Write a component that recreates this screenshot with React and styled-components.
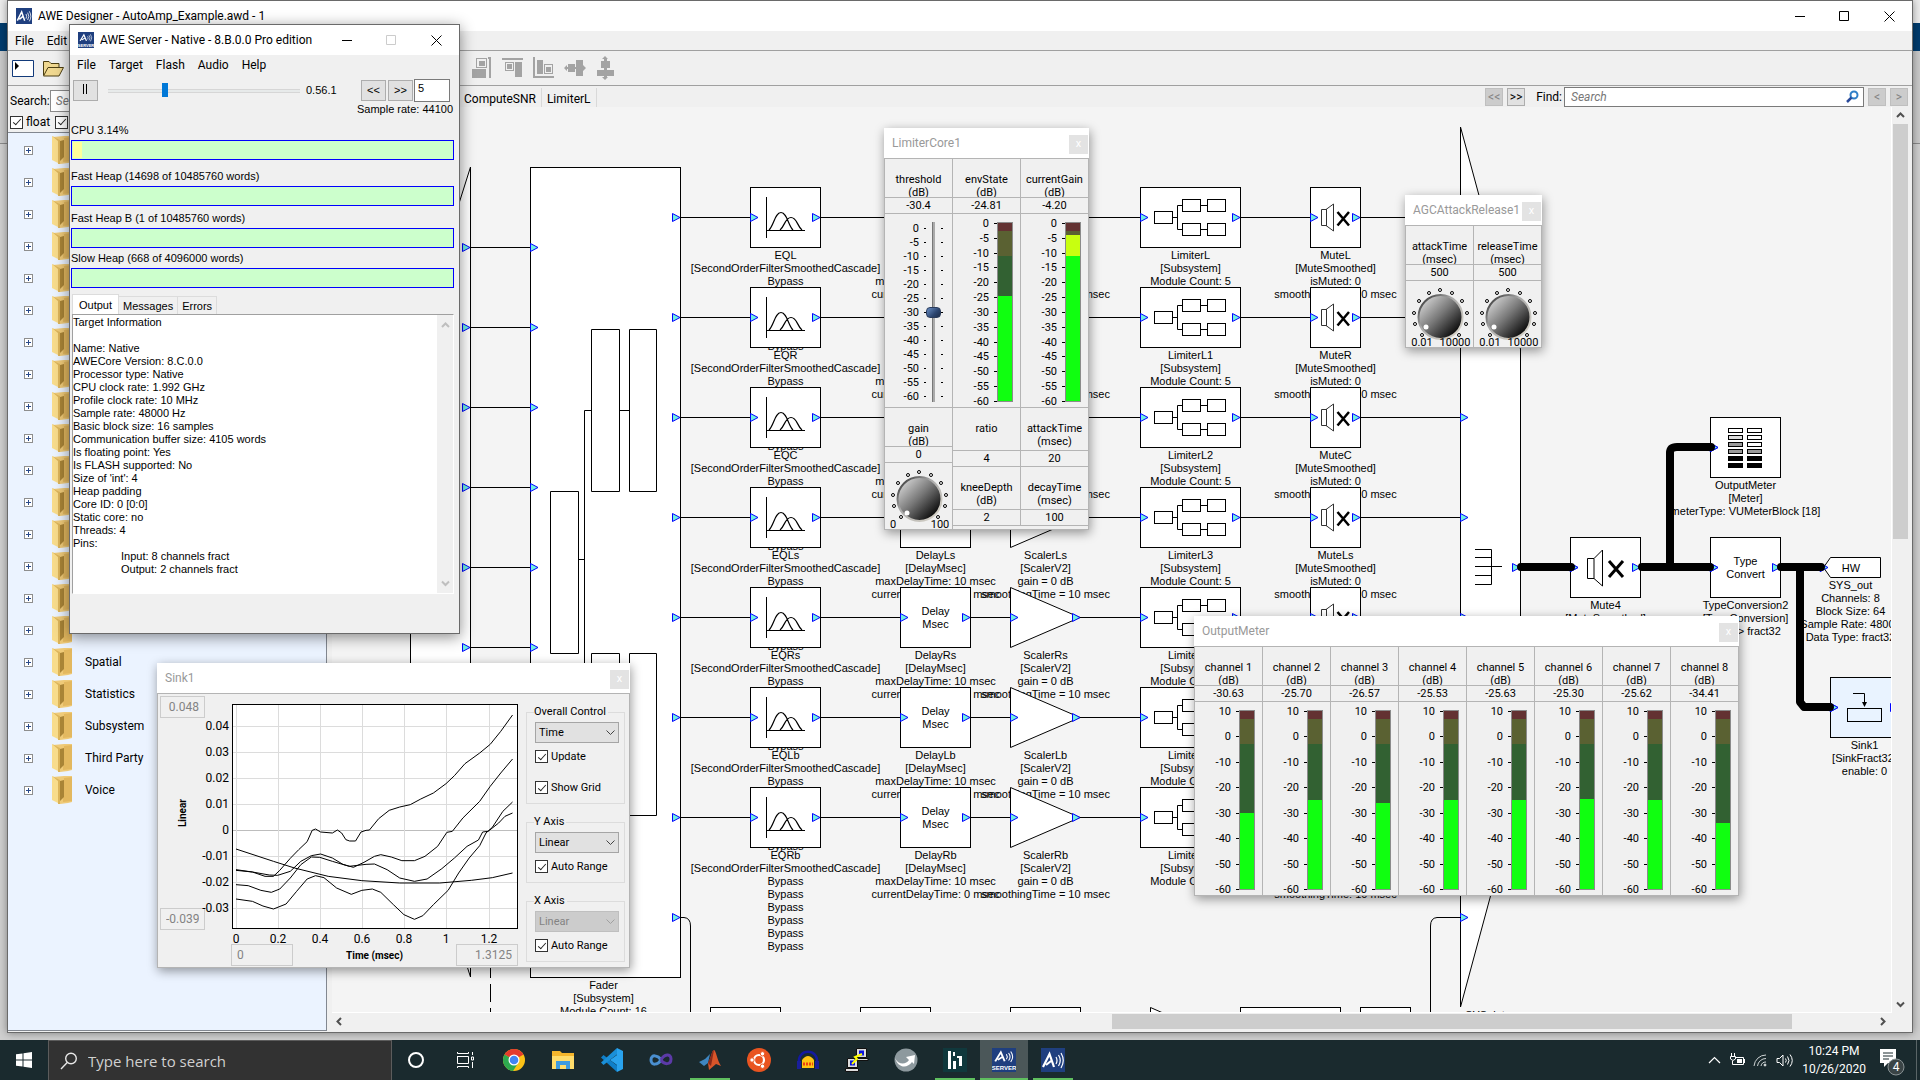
import React from "react";
import styled, { createGlobalStyle, css } from "styled-components";

const ui = `"Segoe UI", "Open Sans", "Noto Sans", sans-serif`;
const tahoma = `Tahoma, Roboto, "Noto Sans", sans-serif`;
const arial = `"Liberation Sans", Arial, sans-serif`;

const Global = createGlobalStyle`
  *, *::before, *::after { box-sizing: border-box; }
  body { margin: 0; background: #cfcfcf; color: #000; font: 12px/16px ${tahoma}; overflow: hidden; }
  button, input, select, textarea { font: inherit; color: inherit; margin: 0; border-radius: 0; }
`;

/* ---------- desktop ---------- */
const Desktop = styled.div`
  height: 100vh;
  display: flex;
  flex-direction: column;
`;
const Area = styled.div`
  position: relative;
  flex: 1;
  min-height: 0;
  overflow: hidden;
  background: linear-gradient(#ececec 0 23px, #003c6e 23px 51px, #c9c9c9 51px 143px, #8a8a8a 143px 144px, #cfcfcf 144px);
`;
const AppWindow = styled.section`
  position: absolute;
  display: flex;
  flex-direction: column;
  background: #f0f0f0;
  border: 1px solid #6a6a6a;
  box-shadow: ${(p) => (p.$flat ? "0 0 8px rgba(0,0,0,.4)" : "0 3px 14px rgba(0,0,0,.45)")};
`;
const MainWindow = styled(AppWindow)`
  inset: 0 7px 7px 7px;
`;
const ServerWindow = styled(AppWindow)`
  left: 69px;
  top: 24px;
  width: 391px;
  height: 610px;
`;
const TitleBar = styled.header`
  display: flex;
  align-items: center;
  height: 30px;
  flex: none;
  background: #fff;
  padding-left: 8px;
`;
const Title = styled.h1`
  margin: 0 0 0 6px;
  flex: 1;
  font: 12px/16px ${tahoma};
  white-space: nowrap;
`;
const WinButton = styled.button`
  width: 45px;
  height: 30px;
  padding: 0;
  border: 0;
  background: none;
  display: grid;
  place-items: center;
  color: ${(p) => (p.disabled ? "#ccc" : "#000")};
`;
const MenuBar = styled.nav`
  display: flex;
  align-items: center;
  flex: none;
  height: 19px;
  padding-left: 7px;
  gap: 13px;
  button { border: 0; background: none; padding: 0; line-height: 16px; }
`;
const ToolBar = styled.div`
  display: flex;
  align-items: center;
  height: 36px;
  flex: none;
  border-top: 1px solid #a0a0a0;
  border-bottom: 1px solid #a0a0a0;
  padding-left: 4px;
  gap: 10px;
  button { border: 0; background: none; padding: 0; display: grid; place-items: center; width: 21px; height: 24px; }
`;
const ToolSpacer = styled.span`
  width: 387px;
`;
const Body = styled.div`
  display: flex;
  flex: 1;
  min-height: 0;
`;

/* ---------- module tree ---------- */
const Side = styled.aside`
  width: 324px;
  flex: none;
  display: flex;
  flex-direction: column;
  padding: 0 5px 1px 0;
`;
const SearchRow = styled.div`
  display: flex;
  align-items: center;
  height: 26px;
  padding: 3px 0 0 2px;
  input { flex: 1; height: 22px; border: 1px solid #8a8a8a; padding: 0 5px; background: #fff; }
  input::placeholder { font-style: italic; color: #777; }
`;
const CheckRow = styled.div`
  display: flex;
  align-items: center;
  height: 20px;
  padding-left: 2px;
  gap: 5px;
`;
const Check = styled.label`
  display: flex;
  align-items: center;
  gap: 3px;
  height: 13px;
  white-space: nowrap;
  input {
    appearance: none;
    width: 13px;
    height: 13px;
    flex: none;
    border: 1px solid #333;
    background: #fff;
    display: grid;
    place-items: center;
  }
  input:checked::after {
    content: "";
    width: 4px;
    height: 8px;
    border: solid #222;
    border-width: 0 1px 1px 0;
    transform: rotate(42deg);
    margin-top: -2px;
  }
`;
const Tree = styled.ul`
  flex: 1;
  margin: 0;
  padding: 1px 0 0 16px;
  list-style: none;
  background: #ebf3ff;
  border: 1px solid #828790;
  border-left: 0;
  overflow: hidden;
`;
const TreeItem = styled.li`
  display: flex;
  align-items: center;
  height: 32px;
  font-size: 12px;
  button {
    width: 9px;
    height: 9px;
    border: 1px solid #8e8e8e;
    background: #fff;
    padding: 0;
    display: grid;
    place-items: center;
  }
  svg.folder { margin: 0 11px 0 19px; }
`;

/* ---------- schematic area ---------- */
const Work = styled.main`
  flex: 1;
  min-width: 0;
  display: flex;
  flex-direction: column;
  padding-bottom: 2px;
`;
const TabStrip = styled.div`
  display: flex;
  align-items: center;
  height: 21px;
  flex: none;
`;
const SheetTabs = styled.div`
  display: flex;
  align-self: stretch;
  flex: 1;
  padding-left: 127px;
  padding-top: 2px;
  button { border: 0; border-right: 1px solid #d9d9d9; background: none; padding: 3px 5px 0; line-height: 16px; }
`;
const SmallButton = styled.button`
  width: 18px;
  height: 18px;
  margin-right: 4px;
  padding: 0;
  border: 1px solid ${(p) => (p.disabled ? "#bfbfbf" : "#adadad")};
  background: ${(p) => (p.disabled ? "#ccc" : "#e1e1e1")};
  color: ${(p) => (p.disabled ? "#838383" : "#000")};
  font: 12px/14px ${tahoma};
`;
const FindLabel = styled.label`
  padding: 0 2px 0 7px;
  line-height: 18px;
`;
const FindBox = styled.span`
  display: flex;
  align-items: center;
  width: 300px;
  height: 20px;
  margin-right: 4px;
  padding-right: 4px;
  border: 1px solid #7a7a7a;
  background: #fff;
  input { flex: 1; min-width: 0; border: 0; outline: 0; background: none; padding: 0 6px; height: 18px; }
  input::placeholder { font-style: italic; color: #777; }
`;
const CanvasRow = styled.div`
  flex: 1;
  min-height: 0;
  display: flex;
`;
const Canvas = styled.div`
  position: relative;
  flex: 1;
  overflow: hidden;
  background: #f4f4f4;
  border-right: 1px solid #fff;
  border-bottom: 1px solid #fff;
`;
const Scrolled = styled.div`
  position: absolute;
  left: -332px;
  top: -107px;
  width: 2000px;
  height: 1200px;
`;
const Wires = styled.svg`
  position: absolute;
  inset: 0;
`;
const Bar = styled.div`
  display: flex;
  flex: none;
  justify-content: space-between;
  align-items: center;
  background: #f0f0f0;
  ${(p) => (p.$vertical
    ? css`width: 16px; flex-direction: column; padding: 4px 0; margin-right: 4px;`
    : css`height: 17px; padding: 0 25px 0 3px;`)}
`;
const ThumbV = styled.span`
  width: 15px;
  height: 415px;
  margin: 4px 0 auto;
  background: #cdcdcd;
`;
const ThumbH = styled.span`
  width: 680px;
  height: 15px;
  margin: 0 86px 0 auto;
  background: #cdcdcd;
`;

const Node = styled.div`
  position: absolute;
  left: ${(p) => p.$x}px;
  top: ${(p) => p.$y}px;
  width: ${(p) => p.$w}px;
  display: flex;
  flex-direction: column;
  align-items: center;
  font: 11px/13px ${arial};
  text-align: center;
  white-space: pre;
`;
const Block = styled.div`
  display: flex;
  align-items: center;
  justify-content: space-between;
  flex: none;
  width: 100%;
  height: 61px;
  margin-bottom: 1px;
  border: 1px solid #000;
  background: ${(p) => p.$fill || "#fff"};
  > svg:first-child { margin-left: -1px; }
  > svg:last-child { margin-right: -1px; }
`;

const Port = () => (
  <svg width="9" height="9" aria-hidden="true"><path d="M.5 .5 8 4.500.5 8.500Z" fill="#70f0e0" stroke="#00f" /></svg>
);
const PortAt = ({ x, y }) => <path d={`M${x + 0.5} ${y - 4}l7.500 4-7.500 4z`} fill="#70f0e0" stroke="#00f" />;

const EqGlyph = () => (
  <svg width="40" height="42" fill="none" stroke="#000">
    <path d="M.5 0V41M0 33.500H39" />
    <path d="M3 33C8 28 9 15.500 15 15.500S22 28 27 33M14 33C19 29 19 20.500 25 20.500S31 29 36 33" strokeWidth="1.200" />
  </svg>
);
const SubGlyph = () => (
  <svg width="74" height="38" fill="#fff" stroke="#000">
    <path d="M19 18.500H23.500M28 6.500H23.500V30.500H28M47 6.500H53M47 30.500H53" fill="none" />
    <rect x=".5" y="12.500" width="18" height="12" />
    {[28.5, 53.5].map((x) => [0.5, 24.5].map((y) => <rect key={x + y} x={x} y={y} width="18" height="12" />))}
  </svg>
);
const MuteGlyph = ({ big }) => (
  <svg width={big ? 38 : 29} height={big ? 38 : 29} viewBox={big ? "0 0 38 38" : "0 0 29 29"} fill="none" stroke="#000">
    {big ? (
      <>
        <path d="M.5 9.500H7L15.500 1V37L7 29.500H.500ZM7 9.500V29.500" />
        <path d="M22 12 36 28M36 12 22 28" strokeWidth="3" />
      </>
    ) : (
      <>
        <path d="M.5 6.500H5L12.500 1V28L5 22.500H.500ZM5.500 6V23" stroke="#333" />
        <path d="M16.500 9 28 22.500M28 9 16.500 22.500" strokeWidth="2.500" />
      </>
    )}
  </svg>
);
const VuGlyph = () => (
  <svg width="35" height="42" stroke="#000">
    {["#fff", "#ddd", "#999", "#999", "#000", "#000"].map((c, i) => <rect key={i} x=".5" y={1.5 + i * 7} width="14" height="4" fill={c} />)}
    {["#fff", "#fff", "#fff", "#999", "#000", "#000"].map((c, i) => <rect key={i} x="19.500" y={1.5 + i * 7} width="14" height="4" fill={c} />)}
  </svg>
);
const SinkGlyph = () => (
  <svg width="36" height="31" fill="none" stroke="#000">
    <path d="M6 1.500H17.500V12" /><path d="M15 10h5l-2.500 5z" fill="#000" stroke="none" />
    <rect x=".5" y="16.500" width="34" height="13" />
  </svg>
);

const Module = ({ x, y, w, lines, glyph, fill, outPort = true }) => (
  <Node $x={x} $y={y} $w={w}>
    <Block $fill={fill}><Port />{glyph}{outPort ? <Port /> : <svg width="9" height="9" />}</Block>
    {lines.map((l, i) => <span key={i}>{l}</span>)}
  </Node>
);

const channels = ["L", "R", "C", "Ls", "Rs", "Lb", "Rb"];
const Row = ({ name, index }) => {
  const y = 187 + index * 100;
  return (
    <>
      <Module x={750} y={y} w={71} glyph={<EqGlyph />}
        lines={[`EQ${name}`, "[SecondOrderFilterSmoothedCascade]", ...Array(6).fill("Bypass")]} />
      <Module x={900} y={y} w={71} glyph={<span>{"Delay\nMsec"}</span>}
        lines={[`Delay${name}`, "[DelayMsec]", "maxDelayTime: 10 msec", "currentDelayTime: 0 msec"]} />
      <Node $x={1010} $y={y} $w={71}>
        <svg width="71" height="62">
          <path d="M.5 .5V60.500L70 30.500Z" fill="#fff" stroke="#000" />
          <PortAt x={0} y={30.5} /><PortAt x={62} y={30.5} />
        </svg>
        {[`Scaler${name}`, "[ScalerV2]", "gain = 0 dB", "smoothingTime = 10 msec"].map((l) => <span key={l}>{l}</span>)}
      </Node>
      <Module x={1140} y={y} w={101} glyph={<SubGlyph />}
        lines={[`LimiterL${index || ""}`, "[Subsystem]", "Module Count: 5"]} />
      <Module x={1310} y={y} w={51} glyph={<MuteGlyph />}
        lines={[`Mute${name}`, "[MuteSmoothed]", "isMuted: 0", "smoothingTime: 10 msec"]} />
    </>
  );
};

const Schematic = () => (
  <Scrolled>
    <Wires width="2000" height="1200" fill="none" stroke="#000">
      <path d="M470.500 167V977L410.500 790V357Z" fill="#fff" />
      <path d="M490.500 960V1020" strokeDasharray="18 6" />
      <rect x="530.500" y="167.500" width="150" height="810" fill="#fff" />
      <path d="M591 410.500H584.500V735.500H591M578 559.500H584.500M620 410.500H629M620 735.500H629" />
      <path d="M591.500 329.500h28v162h-28zM629.500 329.500h27v162h-27zM550.500 491.500h28v162h-28zM591.500 653.500h28v162h-28zM629.500 653.500h27v162h-27z" />
      <path d="M1460.500 127V1007L1520.500 785V349Z" fill="#fff" />
      {channels.map((c, i) => <path key={c} d={`M681 ${217.5 + i * 100}H1461`} />)}
      {[0, 1, 2, 3, 4, 5, 6, 7].map((i) => (
        <React.Fragment key={i}>
          <path d={`M471 ${247.5 + i * 80}H530`} />
          <PortAt x={462} y={247.5 + i * 80} />
          <PortAt x={530} y={247.5 + i * 80} />
          <PortAt x={672} y={217.5 + i * 100} />
          <PortAt x={1460} y={217.5 + i * 100} />
        </React.Fragment>
      ))}
      <path d="M681 917.500H684Q690.500 918 690.500 926V1020M1461 917.500H1437Q1430.500 918 1430.500 926V1020" />
      <path d="M1475 549.500H1491.500V584.500H1475M1475 557.500H1491M1475 566.500H1502M1475 575.500H1491" />
      <PortAt x={1512} y={567.5} />
      {[[710, 70], [860, 70], [1010, 70], [1240, 100], [1360, 50]].map(([x, w]) => (
        <rect key={x} x={x + 0.5} y="1007.500" width={w} height="61" fill="#fff" />
      ))}
      <path d="M1150.500 1068V1007.500L1220 1038Z" fill="#fff" />
    </Wires>
    <Node $x={530} $y={979} $w={147}>{"Fader\n[Subsystem]\nModule Count: 16"}</Node>
    <Node $x={1461} $y={1009} $w={48}>SYS_int</Node>
    {channels.map((c, i) => <Row key={c} name={c} index={i} />)}
    <Module x={1570} y={537} w={71} glyph={<MuteGlyph big />} lines={["Mute4", "[MuteSmoothed]", "isMuted: 0"]} />
    <Module x={1710} y={417} w={71} glyph={<VuGlyph />} outPort={false} lines={["OutputMeter", "[Meter]", "meterType: VUMeterBlock [18]"]} />
    <Module x={1710} y={537} w={71} glyph={<span>{"Type\nConvert"}</span>} lines={["TypeConversion2", "[TypeConversion]", "float -> fract32"]} />
    <Module x={1830} y={677} w={69} glyph={<SinkGlyph />} fill="#e9f3ff" lines={["Sink1", "[SinkFract32]", "enable: 0"]} />
    <Node $x={1820} $y={557} $w={61}>
      <svg width="61" height="22">
        <path d="M3.500 10.500 10.500 .5H60.500V20.500H10.500Z" fill="#fff" stroke="#000" />
        <text x="31" y="15" fontSize="11" textAnchor="middle">HW</text>
      </svg>
      {["SYS_out", "Channels: 8", "Block Size: 64", "Sample Rate: 48000", "Data Type: fract32"].map((l) => <span key={l}>{l}</span>)}
    </Node>
    <Wires width="2000" height="1200" fill="none" stroke="#000" strokeWidth="8" strokeLinecap="round" strokeLinejoin="round">
      <g strokeWidth="1">
        {[[1570, 567.5], [1710, 567.5], [1710, 447.5], [1820, 567.5], [1830, 707.500]].map(([x, y]) => <PortAt key={x + y} x={x} y={y} />)}
      </g>
      <path d="M1521 567H1571M1642 567H1710M1670 567V453Q1670 447 1677 447H1711M1781 567H1821M1800 567V702L1804 707H1830" />
    </Wires>
  </Scrolled>
);

/* ---------- inspector panels ---------- */
const Panel = styled.section`
  position: absolute;
  left: ${(p) => p.$x}px;
  top: ${(p) => p.$y}px;
  background: #f0f0f0;
  box-shadow: 1px 3px 10px rgba(0, 0, 0, 0.4);
  font: 11px/13px ${tahoma};
`;
const PanelTitle = styled.header`
  display: flex;
  justify-content: space-between;
  align-items: center;
  height: 30px;
  padding: 0 1px 0 8px;
  background: #fff;
  h2 { margin: 0; font: 12px/16px ${tahoma}; color: #999; }
  button { width: 19px; height: 19px; margin-top: 2px; border: 0; padding: 0; background: #e3e3e3; color: #fff; font: 11px/16px ${tahoma}; }
`;
const PanelHead = ({ title }) => (
  <PanelTitle><h2>{title}</h2><button aria-label={`Close ${title}`}>x</button></PanelTitle>
);
const Cells = styled.div`
  display: flex;
  gap: 1px;
  padding: ${(p) => (p.$inner ? 0 : 1)}px;
  background: #b4b4b4;
`;
const Stack = styled.div`
  display: flex;
  flex-direction: column;
  gap: 1px;
  flex: ${(p) => (p.$grow ? "1" : "none")};
`;
const Cell = styled.div`
  width: 67px;
  background: #f0f0f0;
  text-align: center;
`;
const Head = styled(Cell)`
  height: ${(p) => (p.$tall ? 42 : 38)}px;
  padding-top: 14px;
  overflow: hidden;
  white-space: pre;
`;
const Value = styled(Cell)`
  height: 15px;
  line-height: 15px;
`;
const Filler = styled(Cell)`
  flex: 1;
  width: auto;
`;
const Gauge = styled(Cell)`
  height: 193px;
  display: flex;
  align-items: flex-start;
  justify-content: flex-end;
  padding-right: ${(p) => p.$right}px;
`;
const Scale = styled.div`
  display: flex;
  flex-direction: column;
  justify-content: space-between;
  height: ${(p) => p.$h}px;
  margin-top: ${(p) => p.$top}px;
  span { display: flex; align-items: center; justify-content: flex-end; height: 13px; gap: 5px; }
  span::after { content: ""; width: ${(p) => p.$tick}px; height: 1px; background: #000; }
`;
const Column = styled.div`
  display: flex;
  flex-direction: column;
  width: 16px;
  height: 180px;
  margin-top: 8px;
  border: 1px solid #8b8b8b;
`;
const Seg = styled.i`
  background: ${(p) => p.$c};
`;
const VSlider = styled.input`
  appearance: none;
  writing-mode: vertical-lr;
  direction: rtl;
  width: 15px;
  height: 180px;
  margin: 8px 0 0;
  background: linear-gradient(90deg, transparent 6px, #777 6px 7px, #aaa 7px 9px, transparent 9px);
  &::-webkit-slider-thumb {
    appearance: none;
    width: 15px;
    height: 11px;
    border-radius: 4px;
    border: 1px solid #2a3c5c;
    background: linear-gradient(135deg, #6a8fc4, #2b4570 60%, #1c2c48);
  }
`;

const Vu = ({ ticks, segs }) => (
  <Gauge $right={7}>
    <Scale $h={191} $top={3} $tick={3}>{ticks.map((t) => <span key={t}>{t}</span>)}</Scale>
    <Column>{segs.map(([c, h], i) => <Seg key={i} $c={c} style={h ? { height: h } : { flex: 1 }} />)}</Column>
  </Gauge>
);

const KnobSvg = styled.svg`
  display: block;
  width: 67px;
  height: 66px;
`;
const dots = [[16, 54], [9, 43], [8, 32], [13, 20], [23, 12], [34, 9], [46, 12], [56, 20], [61, 32], [60, 43], [53, 54]];
const Knob = ({ label, mark, lo, hi }) => (
  <Cell>
    <KnobSvg viewBox="0 0 67 66" role="slider" aria-label={label} aria-valuenow={0}>
      <defs>
        <linearGradient id="knob" x1="0.1" y1="0.1" x2="0.85" y2="0.85">
          <stop offset="0" stopColor="#d5d5d5" /><stop offset=".5" stopColor="#777" /><stop offset="1" stopColor="#0c0c0c" />
        </linearGradient>
        <linearGradient id="rim" x1="0" y1="0" x2="1" y2="1">
          <stop offset="0" stopColor="#222" /><stop offset=".4" stopColor="#aaa" /><stop offset="1" stopColor="#ddd8cc" />
        </linearGradient>
      </defs>
      {dots.map(([x, y]) => <circle key={x} cx={x} cy={y} r="1.500" fill="#fff" stroke="#000" />)}
      <circle cx="34.500" cy="36" r="22" fill="url(#knob)" stroke="url(#rim)" strokeWidth="2" />
      <circle cx={mark[0]} cy={mark[1]} r="2.500" fill="#fff" />
      <text x={lo[0]} y="65" fontSize="11" textAnchor="middle">{lo[1]}</text>
      <text x={hi[0]} y="65" fontSize="11" textAnchor="middle">{hi[1]}</text>
    </KnobSvg>
  </Cell>
);

const RED = "#633232", OLIVE = "#5a6132", DARK = "#326132", LIME = "#10ff10", YELLOW = "#c8ff10";
const fives = Array.from({ length: 13 }, (_, i) => String(i * -5 || 0));
const tens = ["10", "0", "-10", "-20", "-30", "-40", "-50", "-60"];

const LimiterPanel = () => (
  <Panel $x={884} $y={128}>
    <PanelHead title="LimiterCore1" />
    <Cells>
      <Stack>
        <Head>{"threshold\n(dB)"}</Head><Value>-30.4</Value>
        <Gauge $right={9}>
          <Scale $h={181} $top={8} $tick={2}>{fives.map((t) => <span key={t}>{t}</span>)}</Scale>
          <VSlider type="range" min="-60" max="0" step="0.1" defaultValue="-30" aria-label="threshold" />
          <Scale $h={181} $top={8} $tick={2}>{fives.map((t) => <span key={t} />)}</Scale>
        </Gauge>
        <Head>{"gain\n(dB)"}</Head><Value>0</Value>
        <Knob label="gain" mark={[22, 50]} lo={[8, "0"]} hi={[55, "100"]} />
      </Stack>
      <Stack $grow>
        <Cells $inner>
          <Stack><Head>{"envState\n(dB)"}</Head><Value>-24.81</Value>
            <Vu ticks={fives} segs={[[RED, 8], [OLIVE, 25], [DARK, 40], [LIME]]} /></Stack>
          <Stack><Head>{"currentGain\n(dB)"}</Head><Value>-4.20</Value>
            <Vu ticks={fives} segs={[[RED, 8], [OLIVE, 4], [YELLOW, 21], [LIME]]} /></Stack>
        </Cells>
        <Cells $inner>
          <Stack><Head $tall>ratio</Head><Value>4</Value><Head $tall>{"kneeDepth\n(dB)"}</Head><Value>2</Value></Stack>
          <Stack><Head $tall>{"attackTime\n(msec)"}</Head><Value>20</Value><Head $tall>{"decayTime\n(msec)"}</Head><Value>100</Value></Stack>
        </Cells>
        <Filler />
      </Stack>
    </Cells>
  </Panel>
);

const AgcPanel = () => (
  <Panel $x={1405} $y={195}>
    <PanelHead title="AGCAttackRelease1" />
    <Cells>
      {["attackTime", "releaseTime"].map((n) => (
        <Stack key={n}>
          <Head>{`${n}\n(msec)`}</Head><Value>500</Value>
          <Knob label={n} mark={[20, 46]} lo={[16, "0.01"]} hi={[49, "10000"]} />
        </Stack>
      ))}
    </Cells>
  </Panel>
);

const outputs = [[-30.63, 69], [-25.7, 56], [-26.57, 59], [-25.53, 56], [-25.63, 56], [-25.3, 55], [-25.62, 56], [-34.41, 79]];
const OutputPanel = () => (
  <Panel $x={1194} $y={616}>
    <PanelHead title="OutputMeter" />
    <Cells>
      {outputs.map(([v, dark], i) => (
        <Stack key={i}>
          <Head>{`channel ${i + 1}\n(dB)`}</Head><Value>{v.toFixed(2)}</Value>
          <Vu ticks={tens} segs={[[RED, 8], [OLIVE, 25], [DARK, dark], [LIME]]} />
        </Stack>
      ))}
    </Cells>
  </Panel>
);

/* ---------- Sink1 plot ---------- */
const SinkBody = styled.div`
  display: flex;
  width: 473px;
  height: 275px;
  border: 1px solid #b4b4b4;
  padding: 2px 4px 0 2px;
`;
const Side1 = styled.div`
  display: flex;
  flex-direction: column;
  align-items: center;
  justify-content: space-between;
  width: 45px;
  height: 234px;
`;
const Field = styled.input`
  width: ${(p) => p.$w}px;
  height: 22px;
  border: 1px solid #ccc;
  background: #f0f0f0;
  color: #838383;
  padding: 0 5px;
  font-size: 12px;
  text-align: ${(p) => p.$align || "right"};
`;
const AxisName = styled.b`
  font: bold 10px/13px ${tahoma};
  ${(p) => p.$vertical && css`writing-mode: vertical-rl; transform: rotate(180deg);`}
`;
const PlotCol = styled.div`
  width: 313px;
  svg { display: block; overflow: visible; margin-top: -2px; }
`;
const PlotFoot = styled.div`
  display: flex;
  justify-content: space-between;
  align-items: center;
  padding-left: 26px;
`;
const Groups = styled.div`
  flex: 1;
  padding: 9px 0 0 8px;
`;
const Group = styled.fieldset`
  display: flex;
  flex-direction: column;
  gap: ${(p) => (p.$loose ? 18 : 7)}px;
  min-width: 0;
  margin: 0 0 11px;
  padding: 3px 5px 9px 8px;
  border: 1px solid #dcdcdc;
  legend { padding: 0 2px 0 0; margin-left: -1px; line-height: 14px; white-space: nowrap; }
`;
const Pair = styled.div`
  display: flex;
  flex-direction: column;
  gap: 7px;
`;
const SelectWrap = styled.span`
  position: relative;
  display: block;
  select {
    appearance: none;
    width: 100%;
    height: 21px;
    padding: 0 3px;
    border: 1px solid ${(p) => (p.$off ? "#bfbfbf" : "#a5a5a5")};
    background: ${(p) => (p.$off ? "#ccc" : "#e1e1e1")};
    color: ${(p) => (p.$off ? "#838383" : "#000")};
    opacity: 1;
  }
  svg { position: absolute; right: 4px; top: 8px; pointer-events: none; }
`;
const Select = ({ label, value, off }) => (
  <SelectWrap $off={off}>
    <select aria-label={label} disabled={off}><option>{value}</option></select>
    <svg width="9" height="6" fill="none" stroke={off ? "#a0a0a0" : "#444"}><path d="M.5 .5 4.500 4.500 8.500 .5" /></svg>
  </SelectWrap>
);
const Tick = ({ children }) => <Check><input type="checkbox" defaultChecked />{children}</Check>;

const px = (t) => 31 + t * 0.4209;
const py = (v) => 136 - v / 3;
const series = [
  [[0, -121], [39, -126], [69, -139], [89, -139], [104, -121], [129, -85], [149, -59], [169, -35], [181, -1], [189, 3], [201, -6], [229, -9], [241, 0], [251, -9], [261, -29], [270, -33], [284, -33], [297, -6], [309, -1], [317, 0], [339, 34], [364, 59], [389, 69], [414, 76], [439, 93], [469, 111], [499, 139], [519, 163], [544, 199], [579, 231], [604, 257], [629, 296], [657, 345]],
  [[0, -119], [39, -126], [79, -135], [99, -136], [129, -124], [154, -94], [179, -77], [201, -72], [229, -84], [254, -103], [279, -112], [304, -97], [329, -79], [344, -74], [369, -81], [394, -92], [424, -92], [449, -79], [479, -49], [501, -7], [514, -4], [539, 36], [579, 86], [604, 131], [629, 171], [657, 213]],
  [[0, -164], [29, -167], [59, -181], [84, -187], [104, -177], [129, -144], [154, -104], [179, -81], [199, -82], [229, -94], [269, -109], [309, -103], [329, -102], [359, -119], [389, -144], [424, -154], [454, -147], [489, -116], [519, -84], [549, -49], [576, -30], [586, -6], [599, -4], [624, 21], [639, 41], [657, 51]],
  [[0, -207], [39, -214], [64, -228], [89, -237], [119, -222], [144, -184], [169, -147], [189, -137], [209, -143], [239, -174], [274, -193], [299, -181], [324, -177], [344, -187], [374, -224], [399, -254], [424, -268], [444, -257], [469, -224], [504, -181], [529, -129], [554, -84], [579, -47], [594, -9], [609, 8], [634, 56], [657, 84]],
  [[0, -57], [89, -94], [139, -114], [219, -139], [299, -152], [389, -159], [484, -159], [559, -151], [609, -143], [657, -129]],
];
const SinkPanel = () => (
  <Panel $x={157} $y={663}>
    <PanelHead title="Sink1" />
    <SinkBody>
      <Side1>
        <Field $w={45} defaultValue="0.048" aria-label="Y maximum" disabled />
        <AxisName $vertical>Linear</AxisName>
        <Field $w={45} defaultValue="-0.039" aria-label="Y minimum" disabled />
      </Side1>
      <PlotCol>
        <svg width="313" height="250" fontSize="12">
          <rect x="27.500" y="10.500" width="285" height="224" fill="#fff" stroke="#000" />
          {[4, 3, 2, 1, 0, -1, -2, -3].map((k) => (
            <g key={k}>
              <path d={`M28 ${Math.round(py(k * 78)) + 0.5}H312`} stroke={k ? "#dcdcdc" : "#bdbdbd"} />
              <text x="24" y={Math.round(py(k * 78)) + 4} textAnchor="end">{k ? (k / 100).toFixed(2) : "0"}</text>
            </g>
          ))}
          {[0, 1, 2, 3, 4, 5, 6].map((k) => (
            <g key={k}>
              <path d={`M${Math.round(px(k * 100)) + 0.5} 11V234`} stroke="#dcdcdc" />
              <text x={Math.round(px(k * 100))} y="249" textAnchor="middle">{k / 5}</text>
            </g>
          ))}
          {series.map((s, i) => (
            <polyline key={i} points={s.map(([t, v]) => `${px(t)},${py(v)}`).join(" ")} fill="none" stroke="#000" strokeLinejoin="round" />
          ))}
        </svg>
        <PlotFoot>
          <Field $w={62} $align="left" defaultValue="0" aria-label="X minimum" disabled />
          <AxisName>Time (msec)</AxisName>
          <Field $w={62} defaultValue="1.3125" aria-label="X maximum" disabled />
        </PlotFoot>
      </PlotCol>
      <Groups>
        <Group $loose>
          <legend>Overall Control</legend>
          <Pair><Select label="Domain" value="Time" /><Tick>Update</Tick></Pair>
          <Tick>Show Grid</Tick>
        </Group>
        <Group><legend>Y Axis</legend><Select label="Y Axis" value="Linear" /><Tick>Auto Range</Tick></Group>
        <Group><legend>X Axis</legend><Select label="X Axis" value="Linear" off /><Tick>Auto Range</Tick></Group>
      </Groups>
    </SinkBody>
  </Panel>
);

/* ---------- AWE Server ---------- */
const ServerBody = styled.div`
  font: 11px/14px ${arial};
  padding: 4px 5px 0 1px;
`;
const Transport = styled.div`
  display: flex;
  align-items: center;
  padding: 0 4px 0 2px;
  height: 24px;
`;
const TButton = styled.button`
  width: 25px;
  height: 21px;
  padding: 0;
  border: 1px solid #adadad;
  background: #e1e1e1;
  margin-right: ${(p) => p.$mr}px;
`;
const HSlider = styled.input`
  appearance: none;
  width: 192px;
  height: 14px;
  margin-right: 6px;
  background: linear-gradient(transparent 6px, #d6d6d6 6px 7px, #e7eaea 7px 9px, #d6d6d6 9px 10px, transparent 10px);
  &::-webkit-slider-thumb { appearance: none; width: 6px; height: 14px; background: #0078d7; }
`;
const Time = styled.span`
  flex: 1;
`;
const Block1 = styled.input`
  width: 36px;
  height: 23px;
  border: 1px solid #7a7a7a;
  padding: 0 3px 4px;
  background: #fff;
`;
const Rate = styled.p`
  margin: 0 1px 7px;
  text-align: right;
`;
const Usage = styled.div`
  margin-bottom: ${(p) => p.$after}px;
  p { margin: 0 0 3px; }
  div { height: 20px; border: 1px solid #00f; background: #cfc; padding: 1px; }
  i { display: block; height: 16px; background: #ff9; }
`;
const LogTabs = styled.div`
  display: flex;
  align-items: flex-end;
  height: 21px;
  padding-left: 1px;
`;
const LogTab = styled.button`
  height: ${(p) => (p.$on ? 20 : 18)}px;
  padding: 0 ${(p) => (p.$on ? 6 : 4)}px;
  border: 1px solid #dcdcdc;
  border-bottom: 0;
  border-left-width: ${(p) => (p.$on ? 1 : 0)}px;
  background: ${(p) => (p.$on ? "#fff" : "#f0f0f0")};
`;
const Log = styled.div`
  display: flex;
  height: 280px;
  margin-left: 1px;
  border: 1px solid #a0a0a0;
  border-right-color: #fff;
  border-bottom-color: #fff;
  background: #fff;
  textarea {
    flex: 1;
    border: 0;
    outline: 0;
    resize: none;
    padding: 1px 0 0;
    background: none;
    line-height: 13px;
    tab-size: 48px;
    overflow: hidden;
  }
  div { width: 16px; background: #f0f0f0; display: flex; flex-direction: column; justify-content: space-between; align-items: center; padding: 6px 0 5px; }
`;
const logText = `Target Information

Name: Native
AWECore Version: 8.C.0.0
Processor type: Native
CPU clock rate: 1.992 GHz
Profile clock rate: 10 MHz
Sample rate: 48000 Hz
Basic block size: 16 samples
Communication buffer size: 4105 words
Is floating point: Yes
Is FLASH supported: No
Size of 'int': 4
Heap padding
Core ID: 0 [0:0]
Static core: no
Threads: 4
Pins:
\tInput: 8 channels fract
\tOutput: 2 channels fract`;

const Arrow = ({ dir, color = "#505050" }) => {
  const d = { up: "M1 6 4.500 2.500 8 6", down: "M1 2.500 4.500 6 8 2.500", left: "M6 1 2.500 4.500 6 8", right: "M3 1 6.500 4.500 3 8" }[dir];
  return <svg width="9" height="9" fill="none" stroke={color} strokeWidth="2"><path d={d} /></svg>;
};
const Minimize = () => <svg width="10" height="10"><path d="M0 5.500H10" stroke="currentColor" /></svg>;
const Maximize = () => <svg width="11" height="11"><path d="M.5 .5h9v9h-9z" fill="none" stroke="currentColor" /></svg>;
const Close = () => <svg width="11" height="11"><path d="M.5 .5l10 10M10.500 .5l-10 10" stroke="currentColor" /></svg>;

const AweIcon = ({ size = 16, server }) => (
  <svg width={size} height={size} viewBox="0 0 24 24" fill="none" stroke="#fff">
    <path d="M0 0H24V24H0Z" fill="#1f3f7f" stroke="none" />
    <g transform={server ? "translate(1.500 0) scale(.86 .7)" : undefined}>
      <path d="M2 19 8.500 6 13 19M5 17 10 13" strokeWidth="2.200" />
      <path d="M15 9q2 3.500 0 7M17.500 7q3.500 5.500 0 11M20 5q4.500 7.500 0 15" strokeWidth="1.200" />
    </g>
    {server && <text x="12" y="22" fontSize="6" fontWeight="700" fontFamily="Liberation Sans" textAnchor="middle" fill="#fff" stroke="none">SERVER</text>}
  </svg>
);

const Server = () => (
  <ServerWindow>
    <TitleBar>
      <AweIcon server /><Title>AWE Server - Native - 8.B.0.0 Pro edition</Title>
      <WinButton aria-label="Minimize"><Minimize /></WinButton>
      <WinButton aria-label="Maximize" disabled><Maximize /></WinButton>
      <WinButton aria-label="Close"><Close /></WinButton>
    </TitleBar>
    <MenuBar>{["File", "Target", "Flash", "Audio", "Help"].map((m) => <button key={m}>{m}</button>)}</MenuBar>
    <ServerBody>
      <Transport>
        <TButton $mr={10} aria-label="Pause"><svg width="7" height="11"><path d="M1.500 1V11M4.500 1V11" stroke="#000" /></svg></TButton>
        <HSlider type="range" min="0" max="100" defaultValue="29" aria-label="Position" />
        <Time>0.56.1</Time>
        <TButton $mr={2}>&lt;&lt;</TButton><TButton $mr={1}>&gt;&gt;</TButton>
        <Block1 defaultValue="5" aria-label="Step" />
      </Transport>
      <Rate>Sample rate: 44100</Rate>
      <Usage $after={9}><p>CPU 3.14%</p><div><i style={{ width: "2.5%" }} /></div></Usage>
      <Usage $after={5}><p>Fast Heap (14698 of 10485760 words)</p><div /></Usage>
      <Usage $after={3}><p>Fast Heap B (1 of 10485760 words)</p><div /></Usage>
      <Usage $after={5}><p>Slow Heap (668 of 4096000 words)</p><div /></Usage>
      <LogTabs><LogTab $on>Output</LogTab><LogTab>Messages</LogTab><LogTab>Errors</LogTab></LogTabs>
      <Log>
        <textarea readOnly aria-label="Output" defaultValue={logText} />
        <div><Arrow dir="up" color="#bfbfbf" /><Arrow dir="down" color="#bfbfbf" /></div>
      </Log>
    </ServerBody>
  </ServerWindow>
);

/* ---------- main window ---------- */
const Folder = () => (
  <svg className="folder" width="22" height="30" viewBox="0 0 22 30">
    <path d="M1 2 12 1 20 1V27L16 28 8 29Z" fill="#efca78" />
    <path d="M12 3 20 2V26L11 27Z" fill="#e3b85f" />
    <path d="M8 6 12 5V22L8 26Z" fill="#a98436" />
    <path d="M0 1 8 5V29L0 25Z" fill="#f8dc8c" />
    <path d="M0 1 8 5V29L6 29V6Z" fill="#dcb45a" />
  </svg>
);
const tree = [...Array(15).fill(""), "Sources", "Spatial", "Statistics", "Subsystem", "Third Party", "Voice"];

const alignIcons = [
  "M17 0H20V21H18V2H17ZM5 1H16V11H5ZM6 2V10H15V2ZM8 4H14V9H8ZM1 12H15V21H1Z",
  "M0 1H21V3H0ZM3 5H12V14H3ZM4 6V13H11V6ZM5 7H10V12H5ZM13 5H20V20H13Z",
  "M0 0H2V19H21V21H0ZM4 3H10V17H4ZM11 7H20V17H11ZM12 8V16H19V8ZM13 10H18V15H13Z",
  "M0 12 3 9V11H4V8H11V11H12V4H19V11H19V9L22 12 19 15V13H19V20H12V13H11V16H4V13H3V15Z",
  "M10 0 13 3H12V5H15V12H12V14H19V20H12V21H13L10 24 7 21H9V20H2V14H9V12H6V5H9V3H7Z",
];

const Main = () => (
  <MainWindow $flat>
    <TitleBar>
      <AweIcon /><Title>AWE Designer - AutoAmp_Example.awd - 1</Title>
      <WinButton aria-label="Minimize"><Minimize /></WinButton>
      <WinButton aria-label="Maximize"><Maximize /></WinButton>
      <WinButton aria-label="Close"><Close /></WinButton>
    </TitleBar>
    <MenuBar><button>File</button><button>Edit</button></MenuBar>
    <ToolBar>
      <button aria-label="Run"><svg width="22" height="17"><path d="M.5 .5h21v16h-21z" fill="#fff" stroke="#123a7a" /><path d="M3 2 7 6 3 10Z" /></svg></button>
      <button aria-label="Open"><svg width="21" height="17" fill="#f0d890" stroke="#4d3f12"><path d="M.5 15V1.500H6L8 3.500H16V7" /><path d="M.5 16 5 7.500H20.500L16 16Z" /></svg></button>
      <ToolSpacer />
      {alignIcons.map((d, i) => (
        <button key={i} aria-label={`Align ${i + 1}`}><svg width="22" height="24" viewBox={i < 3 ? "0 -1 22 24" : "0 0 22 24"}><path d={d} fill="#a3a3a3" fillRule="evenodd" /></svg></button>
      ))}
    </ToolBar>
    <Body>
      <Side>
        <SearchRow><label htmlFor="mod">Search:</label><input id="mod" placeholder="Search" /></SearchRow>
        <CheckRow><Tick>float</Tick><Tick>fract32</Tick></CheckRow>
        <Tree>
          {tree.map((t, i) => (
            <TreeItem key={i}>
              <button aria-label="Expand"><svg width="7" height="7"><path d="M1 3.500H6M3.500 1V6" stroke="#2a4a8a" /></svg></button>
              <Folder />{t}
            </TreeItem>
          ))}
        </Tree>
      </Side>
      <Work>
        <TabStrip>
          <SheetTabs><button>ComputeSNR</button><button>LimiterL</button></SheetTabs>
          <SmallButton disabled>&lt;&lt;</SmallButton><SmallButton>&gt;&gt;</SmallButton>
          <FindLabel htmlFor="find">Find:</FindLabel>
          <FindBox>
            <input id="find" placeholder="Search" />
            <svg width="13" height="13" fill="none" stroke="#2f7fc8"><circle cx="8" cy="5" r="3.500" strokeWidth="2" /><path d="M5.500 7.500 1 12" stroke="#2a4a9a" strokeWidth="2.500" /></svg>
          </FindBox>
          <SmallButton disabled>&lt;</SmallButton><SmallButton disabled>&gt;</SmallButton>
        </TabStrip>
        <CanvasRow>
          <Canvas><Schematic /></Canvas>
          <Bar $vertical><Arrow dir="up" /><ThumbV /><Arrow dir="down" /></Bar>
        </CanvasRow>
        <Bar><Arrow dir="left" /><ThumbH /><Arrow dir="right" /></Bar>
      </Work>
    </Body>
  </MainWindow>
);

/* ---------- taskbar ---------- */
const TaskbarRoot = styled.footer`
  display: flex;
  align-items: stretch;
  height: 40px;
  flex: none;
  background: #1a2a2e;
  color: #fff;
`;
const Start = styled.button`
  width: 48px;
  border: 0;
  padding: 0;
  background: none;
  display: grid;
  place-items: center;
`;
const TaskSearch = styled.label`
  display: flex;
  align-items: center;
  gap: 10px;
  width: 344px;
  padding-left: 11px;
  background: #323232;
  border: 1px solid #5c5c5c;
  border-bottom: 0;
  input { flex: 1; border: 0; outline: 0; background: none; font: 15px/20px ${ui}; padding: 0; }
  input::placeholder { color: #d0d0d0; opacity: 1; }
`;
const TaskButton = styled.button`
  width: 48px;
  margin-right: 1px;
  border: 0;
  padding: 0;
  background: ${(p) => (p.$active ? "#4b5759" : "none")};
  display: grid;
  place-items: center;
  ${(p) => p.$open && css`box-shadow: inset 0 -2px #5fbf5f;`}
  ${(p) => p.$open && !p.$active && css`background: linear-gradient(#5fbf5f, #5fbf5f) center bottom / 40px 2px no-repeat; box-shadow: none;`}
`;
const Tray = styled.div`
  display: flex;
  align-items: center;
  margin-left: auto;
  gap: 8px;
  padding-right: 3px;
`;
const Clock = styled.time`
  text-align: center;
  font-size: 12px;
  line-height: 18px;
`;
const Peek = styled.span`
  width: 1px;
  align-self: stretch;
  background: #5a6567;
`;

const icons = [
  { n: "Cortana", i: <circle cx="12" cy="12" r="7" fill="none" stroke="#fff" strokeWidth="2" /> },
  { n: "Task View", i: <path d="M4 8.500H15.500V15.500H4.500V8.500M4.500 4V5.500H15.500V4M4.500 20V18.500H15.500V20M19.500 4V7M19.500 14V20M18.500 9h2v3h-2z" fill="none" stroke="#fff" /> },
  { n: "Chrome", i: <><circle cx="12" cy="12" r="11" fill="#fbc116" /><path d="M12 12 2.500 6.500A11 11 0 0 1 21.500 6.500Z" fill="#e33b2e" /><path d="M12 12 2.500 6.500A11 11 0 0 0 11 23L16.500 14.500Z" fill="#2da94f" /><circle cx="12" cy="12" r="5.500" fill="#fff" /><circle cx="12" cy="12" r="4.300" fill="#4285f4" /></> },
  { n: "File Explorer", i: <><path d="M1 3H9L11 5H23V21H1Z" fill="#f5b62c" /><path d="M1 8H23V21H1Z" fill="#ffdc6b" /><path d="M5 13H19V21H15V17H9V21H5Z" fill="#3d9be0" /></> },
  { n: "Visual Studio Code", i: <><path d="M17 0 23 3V21L17 24V17L10 12 17 7Z" fill="#29a3ee" /><path d="M17 24 1 9.500 3.500 7 17 17.500Z" fill="#0f7fc9" /><path d="M17 0 1 14.500 3.500 17 17 6.500Z" fill="#1a8fd8" /></> },
  { n: "Visual Studio", i: <><path d="M12 12C9 7 2 6 2 12S9 17 12 12" fill="none" stroke="#4a8fd0" strokeWidth="3" /><path d="M12 12C15 6 22 5 22 11S15 17 12 12" fill="none" stroke="#5c3aa8" strokeWidth="3" /></> },
  { n: "MATLAB", open: true, i: <><path d="M1 14 7 11 12 6 10 15 6 18Z" fill="#3f86c0" /><path d="M10 15C13 10 14 2 16 2S19 12 23 18L18 16 11 22Z" fill="#d8552a" /><path d="M10 15C13 10 14 2 16 2L13 18Z" fill="#8a2a1a" /></> },
  { n: "Ubuntu", i: <><circle cx="12" cy="12" r="12" fill="#e95420" /><circle cx="12" cy="12" r="5" fill="none" stroke="#fff" strokeWidth="2.200" /><g fill="#fff" stroke="#e95420"><circle cx="5" cy="12" r="2.200" /><circle cx="15.500" cy="5.800" r="2.200" /><circle cx="15.500" cy="18.200" r="2.200" /></g></> },
  { n: "Audacity", i: <><path d="M3 15C1 0 23 0 21 15" fill="none" stroke="#1419a0" strokeWidth="2.500" /><path d="M6 20V12Q12 4 18 12V20Z" fill="#ffc414" /><path d="M7 16H17" stroke="#f04010" strokeWidth="3" strokeDasharray="2 1" /><path d="M1 13H5V21H1ZM19 13H23V21H19Z" fill="#1a1f9a" /></> },
  { n: "PuTTY", i: <><g fill="#ddd" stroke="#111"><path d="M11.500 .5h10v9h-10zM10 10.500h13v2h-13zM2.500 10.500h10v9h-10zM.5 20.500h13v3h-13z" /></g><path d="M14 2.500h5v5h-5zM5 12.500h5v5h-5z" fill="#0a14e0" /><path d="M17 6 10 9 12 11 7 16" stroke="#ff0" strokeWidth="2" fill="none" /></> },
  { n: "Sync", i: <><circle cx="12" cy="12" r="11.500" fill="#8d999e" /><path d="M1 10C4 17 12 17 15 12L12 9 21 7 20 16 18 14C13 21 4 20 1 10Z" fill="#fff" /></> },
  { n: "Plan", open: true, i: <><path d="M0 0H24V24H0Z" fill="#10383c" /><path d="M5 3H8V21H5ZM10 4H12V8H10ZM10 13H13V21H10ZM16 8H19V18H16ZM14 8H16V10H14Z" fill="#fff" /></> },
];

const Taskbar = () => (
  <TaskbarRoot>
    <Start aria-label="Start"><svg width="16" height="16" fill="#fff"><path d="M0 2.300 6.500 1.400V7.500H0ZM7.500 1.200 16 0V7.500H7.500ZM0 8.500H6.500V14.600L0 13.700ZM7.500 8.500H16V16L7.500 14.800Z" /></svg></Start>
    <TaskSearch>
      <svg width="18" height="18" fill="none" stroke="#e8e8e8" strokeWidth="1.400"><circle cx="11" cy="6.500" r="5.300" /><path d="M7.200 10.500 1 17" /></svg>
      <input placeholder="Type here to search" aria-label="Type here to search" />
    </TaskSearch>
    {icons.map(({ n, i, open }) => (
      <TaskButton key={n} aria-label={n} $open={open}><svg width="24" height="24" viewBox="0 0 24 24">{i}</svg></TaskButton>
    ))}
    <TaskButton aria-label="AWE Server" $open $active><AweIcon size={24} server /></TaskButton>
    <TaskButton aria-label="AWE Designer" $open><AweIcon size={24} /></TaskButton>
    <Tray>
      <svg width="13" height="8" fill="none" stroke="#fff" strokeWidth="1.200"><path d="M1 7 6.500 1.500 12 7" /></svg>
      <svg width="16" height="14" fill="none" stroke="#fff"><path d="M6 4.500H14.500V11.500H3.500V8M15.500 6V10M2.500 0V3M5.500 0V3M1.500 3.500H6.500V6L4 7.500 1.500 6Z" /><path d="M8 6h5v4H8z" fill="#fff" stroke="none" /></svg>
      <svg width="15" height="14" fill="none" stroke="#cfd4d5"><path d="M1 13A12 12 0 0 1 13 2M4.500 13A8.500 8.500 0 0 1 13 5.500M8 13A5 5 0 0 1 13 9" /><circle cx="12" cy="12" r="1" fill="#fff" /></svg>
      <svg width="18" height="15" fill="none" stroke="#fff"><path d="M1 5.500H3.500L7 2V13L3.500 9.500H1Z" /><path d="M9.500 5.500q1.500 2 0 4M11.500 3.500q3 4 0 8M14 1.500q4.500 6 0 12" /></svg>
      <Clock>10:24 PM<br />10/26/2020</Clock>
      <svg width="34" height="32"><path d="M6 5H22V19H14L10 23V19H6Z" fill="#fff" /><path d="M9 9H19M9 12H19M9 15H15" stroke="#1a2a2e" /><circle cx="22" cy="23" r="8" fill="#3a4446" stroke="#8a9395" /><text x="22" y="27" fontSize="12" fill="#fff" textAnchor="middle">4</text></svg>
      <Peek />
    </Tray>
  </TaskbarRoot>
);

export default function App() {
  return (
    <Desktop>
      <Global />
      <Area>
        <Main />
        <LimiterPanel />
        <AgcPanel />
        <OutputPanel />
        <Server />
        <SinkPanel />
      </Area>
      <Taskbar />
    </Desktop>
  );
}
